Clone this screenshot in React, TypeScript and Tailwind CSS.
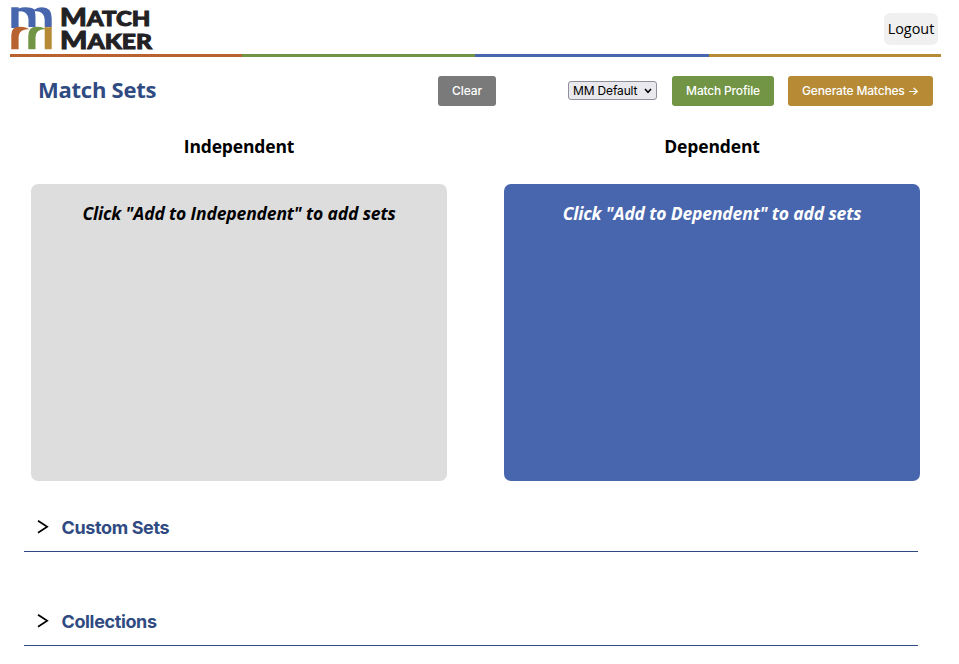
import React from "react";

function Logo() {
  return (
    <svg width="146" height="48" viewBox="8 4 146 48" className="block overflow-visible" role="img" aria-label="Match Maker">
      <path d="M11.3 7.3H18.6V8.6Q21.5 7.3 25.5 7.3Q31.5 7.3 34.6 9.6Q37.5 7.3 42 7.3Q51.7 7.3 51.7 18V27H44.7V20Q44.7 14 39.5 11.8Q37.5 10.9 34.8 11.3Q35.5 13.5 35.5 18V27H28.5V20Q28.5 14 23.5 11.8Q21.3 10.9 18.6 11.5V28H11.3Z" fill="#4866ad" />
      <path d="M11.3 49.3V35Q11.3 26.7 19.5 26.7Q26 26.4 29.2 29.3Q24.5 28.8 21.5 31Q18.6 33.2 18.6 38V49.3Z" fill="#b8622f" />
      <path d="M28.3 49.3V36Q28.3 26.7 36.5 26.7Q42.7 26.4 45.8 29.3Q41 28.8 38.3 31Q35.5 33.2 35.5 38V49.3Z" fill="#719545" />
      <path d="M44.7 26.3Q48 28.5 51.7 26.3V49.3H44.7V29Z" fill="#b78b36" />
      <g fill="#222124" stroke="#222124" strokeWidth="0.9" fontFamily="Lato, sans-serif" fontWeight="900">
        <text x="60" y="25.5" textLength="90.5" lengthAdjust="spacingAndGlyphs" fontSize="24">M<tspan fontSize="20.5">ATCH</tspan></text>
        <text x="60" y="49.3" textLength="92" lengthAdjust="spacingAndGlyphs" fontSize="24">M<tspan fontSize="20.5">AKER</tspan></text>
      </g>
    </svg>
  );
}

function SetRow({ title }: { title: string }) {
  return (
    <div className="flex h-[47px] items-center border-b border-[#304b82] pl-[13px] text-[#304b82]">
      <svg width="12" height="14" viewBox="0 0 12 14" fill="none" stroke="black" strokeWidth="1.7" className="mb-[2px]">
        <path d="M1 0.7L10.2 6.7L1 12.7" />
      </svg>
      <h2 className="ml-[12.5px] font-['Inter',sans-serif] text-[18px] leading-6 font-bold tracking-[-0.37px]">{title}</h2>
    </div>
  );
}

export default function App() {
  return (
    <main className="h-[664px] w-[959px] overflow-hidden bg-white font-['Open_Sans',sans-serif] text-black">
      <header className="ml-[10px] w-[931px]">
        <div className="flex h-[54px] items-start justify-between pt-1 pr-[3px]">
          <div className="-ml-0.5"><Logo /></div>
          <button className="mt-[9px] h-8 w-[54px] rounded-md bg-[#f0f0f0] text-[14.4px] leading-8">Logout</button>
        </div>
        <div className="grid h-[3px] grid-cols-[232px_233px_234px_232px]">
          <span className="bg-[#b8622f]" />
          <span className="bg-[#719545]" />
          <span className="bg-[#4866ad]" />
          <span className="bg-[#b78b36]" />
        </div>
      </header>

      <section className="mt-[19px] ml-[38px] flex h-[30px] w-[895px] items-center">
        <h1 className="mb-[5px] w-[400px] text-[22px] leading-[30px] font-bold tracking-[-0.25px] text-[#304b82]">Match Sets</h1>
        <button className="h-[30px] w-[58px] rounded-[3px] bg-[#7a7a7a] font-['Inter',sans-serif] text-[12px] font-medium tracking-[-0.1px] text-white">Clear</button>
        <button className="mb-px ml-[72px] flex h-[19px] w-[89px] items-center justify-between rounded-[3px] border border-[#8f8f9d] bg-[#e9e9ed] px-[4px] font-['Inter',sans-serif] text-[12px] leading-[17px] tracking-[-0.15px]">
          MM Default
          <svg width="8" height="6" viewBox="0 0 8 6" fill="none" stroke="black" strokeWidth="1.5"><path d="M1 1L4 4.3L7 1" /></svg>
        </button>
        <button className="ml-[15px] h-[30px] w-[102px] rounded-[3px] bg-[#719545] font-['Inter',sans-serif] text-[12px] font-medium tracking-[-0.18px] text-white">Match Profile</button>
        <button className="ml-[14px] h-[30px] w-[145px] rounded-[3px] bg-[#b78b36] font-['Inter',sans-serif] text-[12px] font-medium tracking-[-0.17px] whitespace-nowrap text-white">Generate Matches →</button>
      </section>

      <section className="mt-[27px] ml-[31px] grid w-[889px] grid-cols-[416px_416px] gap-x-[57px] text-center">
        <h2 className="mb-[25px] text-[17.5px] leading-[26px] font-bold tracking-[-0.15px]">Independent</h2>
        <h2 className="mb-[25px] text-[17.5px] leading-[26px] font-bold tracking-[-0.15px]">Dependent</h2>
        <div className="h-[297px] rounded-[7px] bg-[#ddd] pt-[16px] text-[17.5px] leading-[26px] font-bold tracking-[-0.15px] italic">Click "Add to Independent" to add sets</div>
        <div className="h-[297px] rounded-[7px] bg-[#4866ad] pt-[16px] text-[17.5px] leading-[26px] font-bold tracking-[-0.15px] text-white italic">Click "Add to Dependent" to add sets</div>
      </section>

      <section className="mt-[24px] ml-[24px] flex w-[894px] flex-col gap-[47px]">
        <SetRow title="Custom Sets" />
        <SetRow title="Collections" />
      </section>
    </main>
  );
}
